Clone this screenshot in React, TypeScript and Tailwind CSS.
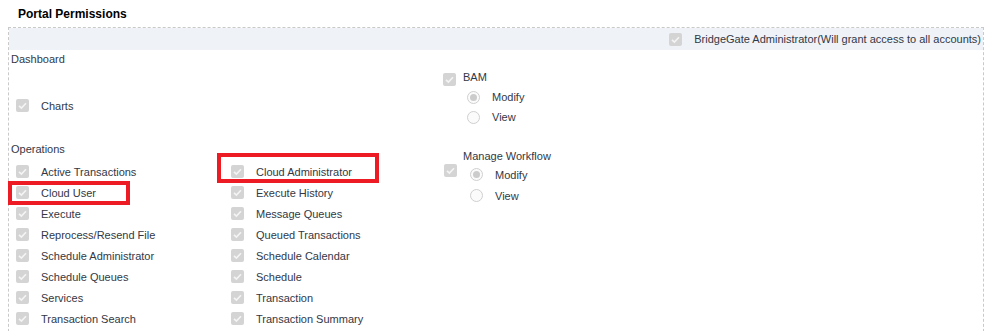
import type { ReactNode } from 'react'

const opsLeft = [
  'Active Transactions',
  'Cloud User',
  'Execute',
  'Reprocess/Resend File',
  'Schedule Administrator',
  'Schedule Queues',
  'Services',
  'Transaction Search',
]

const opsRight = [
  'Cloud Administrator',
  'Execute History',
  'Message Queues',
  'Queued Transactions',
  'Schedule Calendar',
  'Schedule',
  'Transaction',
  'Transaction Summary',
]

function Check() {
  return (
    <svg width="13" height="13" viewBox="0 0 13 13" className="shrink-0">
      <rect x="0" y="0" width="13" height="13" rx="2" fill="#d4d4d4" />
      <path d="M3 6.8 L5.4 9.1 L10 4.2" fill="none" stroke="#f4f4f4" strokeWidth="1.6" />
    </svg>
  )
}

function Radio({ on }: { on?: boolean }) {
  return (
    <svg width="13" height="13" viewBox="0 0 13 13" className="shrink-0">
      <circle cx="6.5" cy="6.5" r="6" fill="#fbfbfb" stroke="#cfcfcf" />
      {on && <circle cx="6.5" cy="6.5" r="3.5" fill="#cccccc" />}
    </svg>
  )
}

function Row({ children }: { children: ReactNode }) {
  return (
    <div className="flex items-center h-[21px]">
      <span className="ml-[5px]">
        <Check />
      </span>
      <span className="ml-[12px] whitespace-nowrap">{children}</span>
    </div>
  )
}

function RadioRow({ on, label, h }: { on?: boolean; label: string; h: string }) {
  return (
    <div className={`flex items-center ${h}`}>
      <Radio on={on} />
      <span className="ml-[12px]">{label}</span>
    </div>
  )
}

export default function App() {
  return (
    <div
      className="relative w-[988px] h-[331px] overflow-hidden bg-white text-[11px] leading-[14px] text-[#323846]"
      style={{ fontFamily: '"Liberation Sans", Arial, sans-serif' }}
    >
      <div className="pl-[18px] pt-[7px] text-[12px] font-bold text-black">Portal Permissions</div>

      <div className="mt-[6px] ml-[8px] mr-[4px] h-[320px] border border-dashed border-b-0 border-[#c9c9c9]">
        <div className="h-[22px] bg-[#eff3f8] flex items-center justify-end pr-[2px]">
          <Check />
          <span className="ml-[12px]">BridgeGate Administrator(Will grant access to all accounts)</span>
        </div>

        <div className="flex pl-[2px]">
          <div className="w-[432px]">
            <div className="mt-[2px]">Dashboard</div>
            <div className="mt-[29px]">
              <Row>Charts</Row>
            </div>
            <div className="mt-[26px]">Operations</div>
            <div className="mt-[5px] flex">
              <div className="w-[215px]">
                {opsLeft.map((o) => (
                  <Row key={o}>{o}</Row>
                ))}
              </div>
              <div>
                {opsRight.map((o) => (
                  <Row key={o}>{o}</Row>
                ))}
              </div>
            </div>
          </div>

          <div>
            <div className="mt-[20px] flex items-start">
              <span className="mt-[3px]">
                <Check />
              </span>
              <span className="ml-[7px]">BAM</span>
            </div>
            <div className="mt-[1px] ml-[24px]">
              <RadioRow on label="Modify" h="h-[20px]" />
              <RadioRow label="View" h="h-[20px]" />
            </div>

            <div className="mt-[22px] ml-[20px]">Manage Workflow</div>
            <div className="flex items-start">
              <span className="mt-[1px] ml-[1px]">
                <Check />
              </span>
              <div className="mt-[1px] ml-[13px]">
                <RadioRow on label="Modify" h="h-[21px]" />
                <RadioRow label="View" h="h-[21px]" />
              </div>
            </div>
          </div>
        </div>
      </div>

      <div className="absolute left-[8px] top-[181px] w-[122px] h-[24px] border-[4px] border-[#ed1c24]" />
      <div className="absolute left-[217px] top-[153px] w-[162px] h-[30px] border-[4px] border-[#ed1c24]" />
    </div>
  )
}
